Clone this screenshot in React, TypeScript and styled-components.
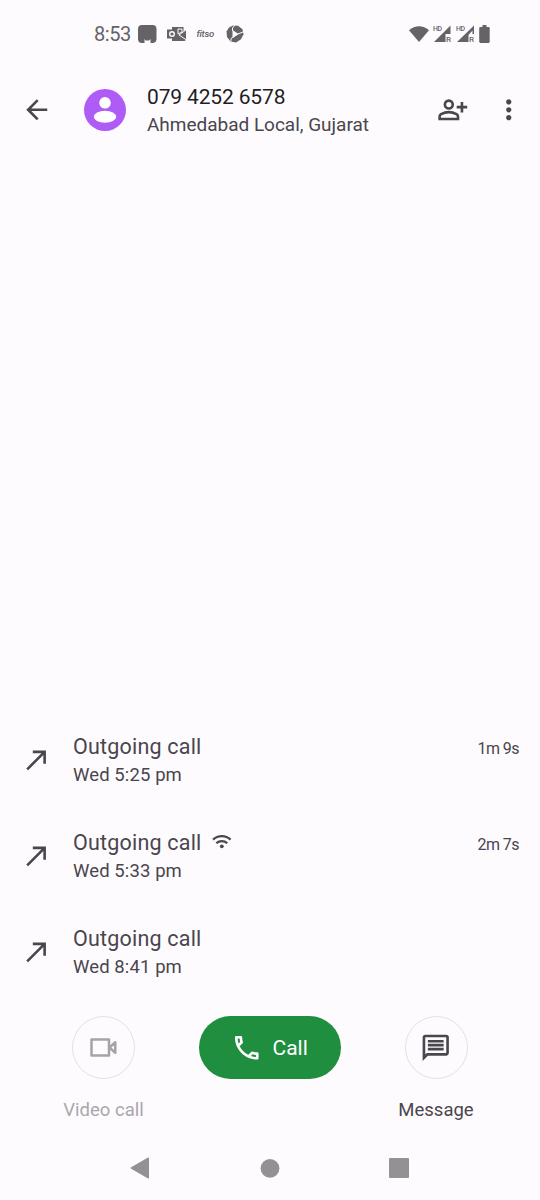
import React from "react";
import styled, { createGlobalStyle } from "styled-components";

const GlobalStyle = createGlobalStyle`
  * { box-sizing: border-box; }
  body { margin: 0; background: #fefbff; }
`;

const Screen = styled.main`
  width: 540px;
  height: 1200px;
  display: flex;
  flex-direction: column;
  background: #fefbff;
  color: #49464d;
  font-family: Roboto, sans-serif;
  overflow: hidden;
  svg { display: block; flex: none; }
`;

const StatusBar = styled.header`
  height: 68px;
  padding: 0 49px 0 94px;
  display: flex;
  align-items: center;
  color: #656268;
`;

const Clock = styled.span`
  width: 44px;
  font-size: 20px;
  line-height: 24px;
  letter-spacing: -0.45px;
  white-space: nowrap;
`;

const StatusIcons = styled.div`
  display: flex;
  align-items: center;
`;

const OutlookIcon = styled.svg`
  margin-left: 10px;
`;

const FitsoLabel = styled.span`
  width: 18px;
  margin: 0 11px 0 9.5px;
  font: italic 500 9.5px/12px Roboto, sans-serif;
  letter-spacing: -0.25px;
  white-space: nowrap;
`;

const StatusRight = styled(StatusIcons)`
  margin-left: auto;
  gap: 1px;
`;

const WifiIcon = styled.svg`
  margin-right: 3px;
`;

const AppBar = styled.section`
  height: 84px;
  padding: 0 15.5px 0 21px;
  display: flex;
  align-items: center;
`;

const IconButton = styled.button`
  padding: 0;
  border: 0;
  background: none;
  color: #49464d;
`;

const Avatar = styled.div`
  width: 42px;
  height: 42px;
  margin: 0 21px 0 31.5px;
`;

const Contact = styled.div`
  flex: 1;
  padding-top: 1px;
`;

const PhoneNumber = styled.h1`
  margin: 0;
  font-size: 21px;
  line-height: 28px;
  font-weight: 400;
  letter-spacing: -0.15px;
  color: #1f1e22;
`;

const Place = styled.p`
  margin: 0;
  font-size: 19px;
  line-height: 28px;
  letter-spacing: -0.02px;
`;

const AppActions = styled.div`
  display: flex;
  gap: 24.5px;
`;

const History = styled.ul`
  flex: 1;
  margin: 0;
  padding: 0;
  list-style: none;
  display: flex;
  flex-direction: column;
  justify-content: flex-end;
`;

const CallRow = styled.li`
  height: 96px;
  padding: 0 21px;
  display: flex;
  align-items: center;
  > svg { margin-bottom: 1px; }
`;

const CallInfo = styled.div`
  flex: 1;
  margin-left: 20.5px;
  padding-top: 3px;
`;

const CallTitle = styled.div`
  display: flex;
  align-items: center;
  gap: 10px;
  font-size: 21.5px;
  line-height: 28px;
  letter-spacing: 0.2px;
  svg { margin-bottom: 4px; }
`;

const CallTime = styled.div`
  font-size: 18.5px;
  line-height: 29px;
  letter-spacing: 0.1px;
`;

const Duration = styled.span`
  margin-bottom: 23px;
  font-size: 16px;
  line-height: 20px;
  letter-spacing: -0.55px;
`;

const Actions = styled.section`
  height: 136px;
  padding: 16px 20px 0 20px;
  display: grid;
  grid-template-columns: 167px 165px 1fr;
`;

const Action = styled.div`
  display: flex;
  flex-direction: column;
  align-items: center;
  gap: 17.5px;
`;

const RoundButton = styled.button`
  width: 63px;
  height: 63px;
  padding: 0;
  border: 1.3px solid #e4dee7;
  border-radius: 50%;
  background: none;
  display: grid;
  place-items: center;
  color: inherit;
`;

const ActionLabel = styled.span<{ $muted?: boolean }>`
  font-size: 18.5px;
  line-height: 26px;
  color: ${(p) => (p.$muted ? "#aaa7ac" : "#49464d")};
`;

const CallButton = styled.button`
  width: 142px;
  height: 63px;
  padding: 0 0 0 32px;
  border: 0;
  border-radius: 32px;
  background: #1f8e3e;
  color: #fff;
  display: flex;
  align-items: center;
  gap: 10.5px;
  font: 400 21px/28px Roboto, sans-serif;
`;

const NavBar = styled.nav`
  height: 64px;
  display: flex;
  justify-content: space-between;
  align-items: center;
  padding: 0 131px 0 130px;
  color: #939194;
`;

const Icon = ({ d, size = 31.5 }: { d: string; size?: number }) => (
  <svg width={size} height={size} viewBox="0 0 24 24" fill="currentColor">
    <path d={d} />
  </svg>
);

const Signal = ({ hollow }: { hollow?: boolean }) => (
  <svg width="22" height="20" viewBox="0 0 22 20" fill="currentColor">
    <text x="0" y="6.500" fontSize="7" fontWeight="500" fontFamily="Roboto, sans-serif" textLength="9">HD</text>
    {hollow ? (
      <path fillRule="evenodd" d="M18 1.500v8.500h-1.500V6.500L12.500 11v7H1z" />
    ) : (
      <path d="M17.500 1.500v8.500h-5v8H1z" />
    )}
    <text x="13" y="18" fontSize="8" fontWeight="500" fontFamily="Roboto, sans-serif">R</text>
  </svg>
);

const WifiCalling = () => (
  <svg width="20" height="15" viewBox="0 0 20 15" fill="none" stroke="currentColor" strokeWidth="2.2">
    <path d="M1 5.600a12.800 12.800 0 0 1 17.600 0M4.300 9.300a8.100 8.100 0 0 1 11 0" />
    <circle cx="9.800" cy="12.300" r="1.900" fill="currentColor" stroke="none" />
  </svg>
);

const calls = [
  { time: "Wed 5:25 pm", duration: "1m 9s" },
  { time: "Wed 5:33 pm", duration: "2m 7s", wifi: true },
  { time: "Wed 8:41 pm" },
];

export default function App() {
  return (
    <Screen>
      <GlobalStyle />
      <StatusBar>
        <Clock>8:53</Clock>
        <StatusIcons>
          <svg width="19" height="18" viewBox="0 0 19 18" fill="currentColor">
            <path d="M4 0h10.500a4 4 0 0 1 4 4v10a4 4 0 0 1-3.500 4h-2.500v-4l-1.500 1.500h-3.500L6.500 14v4H4a4 4 0 0 1-4-4V4a4 4 0 0 1 4-4z" />
          </svg>
          <OutlookIcon width="20" height="16" viewBox="0 0 20 16">
            <path d="M5 1h11.500v4L19 4v10l-1.500 1H5z" fill="currentColor" />
            <path d="M11 3h4v3l-4 2zM19.500 3.500L12 9l7.500 5" fill="none" stroke="#fefbff" strokeWidth="1" />
            <path d="M0 3.500h10v9H0z" fill="currentColor" />
            <circle cx="5" cy="8" r="2.300" fill="none" stroke="#fefbff" strokeWidth="1.400" />
          </OutlookIcon>
          <FitsoLabel>fitso</FitsoLabel>
          <svg width="18" height="18" viewBox="0 0 18 18">
            <path d="M7 .5l5 .2 4.500 3.500 1 5-2.500 5-5 3.300-5.500-1L1 12 .5 6.500 3 2.500z" fill="currentColor" />
            <path d="M6.500 5l6 4-6 4z" fill="#fefbff" />
            <path d="M6.500 6V3L9 0M12 9l6-2.500M12 9l-7 4.500v3" stroke="#fefbff" strokeWidth="1" fill="none" />
          </svg>
        </StatusIcons>
        <StatusRight>
          <WifiIcon width="20" height="16" viewBox="0 0 20 16" fill="currentColor">
            <path d="M0 4.200C6-1.200 14-1.200 20 4.200L10 16z" />
          </WifiIcon>
          <Signal />
          <Signal hollow />
          <svg width="12" height="18" viewBox="0 0 12 18" fill="currentColor">
            <path d="M3.500 0h4v2H10l.7.7v14.300l-1 1H1.200l-1-1V2.700L1 2h2.500z" />
          </svg>
        </StatusRight>
      </StatusBar>

      <AppBar>
        <IconButton aria-label="Back">
          <Icon d="M20 11H7.830l5.590-5.590L12 4l-8 8 8 8 1.410-1.410L7.830 13H20v-2z" />
        </IconButton>
        <Avatar>
          <svg width="42" height="42" viewBox="0 0 42 42">
            <circle cx="21" cy="21" r="21" fill="#af5cf7" />
            <circle cx="21" cy="13.800" r="5.800" fill="#fff" />
            <ellipse cx="21" cy="27.800" rx="11.200" ry="6" fill="#fff" />
          </svg>
        </Avatar>
        <Contact>
          <PhoneNumber>079 4252 6578</PhoneNumber>
          <Place>Ahmedabad Local, Gujarat</Place>
        </Contact>
        <AppActions>
          <IconButton aria-label="Add contact">
            <svg width="31.5" height="31.5" viewBox="0 0 24 24" fill="none" stroke="currentColor" strokeWidth="2">
              <circle cx="9" cy="8" r="3" />
              <path d="M2 19v-1.800c0-.8.400-1.400 1.100-1.800C6.700 13.500 11.300 13.500 14.900 15.400c.7.400 1.100 1 1.100 1.800V19zM19 6v8M15 10h8" />
            </svg>
          </IconButton>
          <IconButton aria-label="More options">
            <Icon d="M12 8c1.100 0 2-.9 2-2s-.9-2-2-2-2 .9-2 2 .9 2 2 2zm0 2c-1.100 0-2 .9-2 2s.9 2 2 2 2-.9 2-2-.9-2-2-2zm0 6c-1.100 0-2 .9-2 2s.9 2 2 2 2-.9 2-2-.9-2-2-2z" />
          </IconButton>
        </AppActions>
      </AppBar>

      <History>
        {calls.map((call) => (
          <CallRow key={call.time}>
            <Icon d="M9 5v2h6.590L4 18.590 5.410 20 17 8.410V15h2V5z" />
            <CallInfo>
              <CallTitle>
                Outgoing call
                {call.wifi && <WifiCalling />}
              </CallTitle>
              <CallTime>{call.time}</CallTime>
            </CallInfo>
            {call.duration && <Duration>{call.duration}</Duration>}
          </CallRow>
        ))}
      </History>

      <Actions>
        <Action>
          <RoundButton aria-label="Video call">
            <svg width="27" height="19" viewBox="0 0 27 19" fill="none" stroke="#a6a3a8" strokeWidth="2.500" strokeLinejoin="round">
              <path d="M1.500 1.500h17.500v16H1.500zM19.500 9.500L25.300 4.300v10.400z" />
            </svg>
          </RoundButton>
          <ActionLabel $muted>Video call</ActionLabel>
        </Action>
        <Action>
          <CallButton>
            <Icon d="M6.540 5c.06.890.210 1.760.450 2.590l-1.200 1.200c-.410-1.200-.670-2.470-.760-3.790h1.510m9.860 12.020c.850.240 1.720.390 2.600.450v1.490c-1.320-.090-2.590-.350-3.800-.750l1.200-1.190M7.500 3H4c-.550 0-1 .450-1 1 0 9.390 7.610 17 17 17 .550 0 1-.450 1-1v-3.490c0-.550-.450-1-1-1-1.240 0-2.450-.2-3.570-.570-.1-.040-.210-.050-.310-.050-.260 0-.510.1-.710.290l-2.200 2.200c-2.830-1.450-5.150-3.760-6.590-6.590l2.200-2.200c.280-.280.360-.670.250-1.020C8.700 6.450 8.500 5.250 8.500 4c0-.550-.450-1-1-1z" />
            Call
          </CallButton>
        </Action>
        <Action>
          <RoundButton aria-label="Message">
            <Icon d="M4 4h16v12H5.170L4 17.170V4m0-2c-1.100 0-1.990.9-1.990 2L2 22l4-4h14c1.100 0 2-.9 2-2V4c0-1.100-.9-2-2-2H4zm2 10h12v2H6v-2zm0-3h12v2H6V9zm0-3h12v2H6V6z" />
          </RoundButton>
          <ActionLabel>Message</ActionLabel>
        </Action>
      </Actions>

      <NavBar>
        <svg width="20" height="22" viewBox="0 0 20 22" fill="currentColor">
          <path d="M17.500.8Q19 0 19 1.500v19q0 1.500-1.500.7L1.200 11.800q-1.200-.8 0-1.600z" />
        </svg>
        <svg width="20" height="20" viewBox="0 0 20 20" fill="currentColor">
          <circle cx="10" cy="10.300" r="9.400" />
        </svg>
        <svg width="20" height="20" viewBox="0 0 20 20" fill="currentColor">
          <rect width="20" height="20" rx="1" />
        </svg>
      </NavBar>
    </Screen>
  );
}
